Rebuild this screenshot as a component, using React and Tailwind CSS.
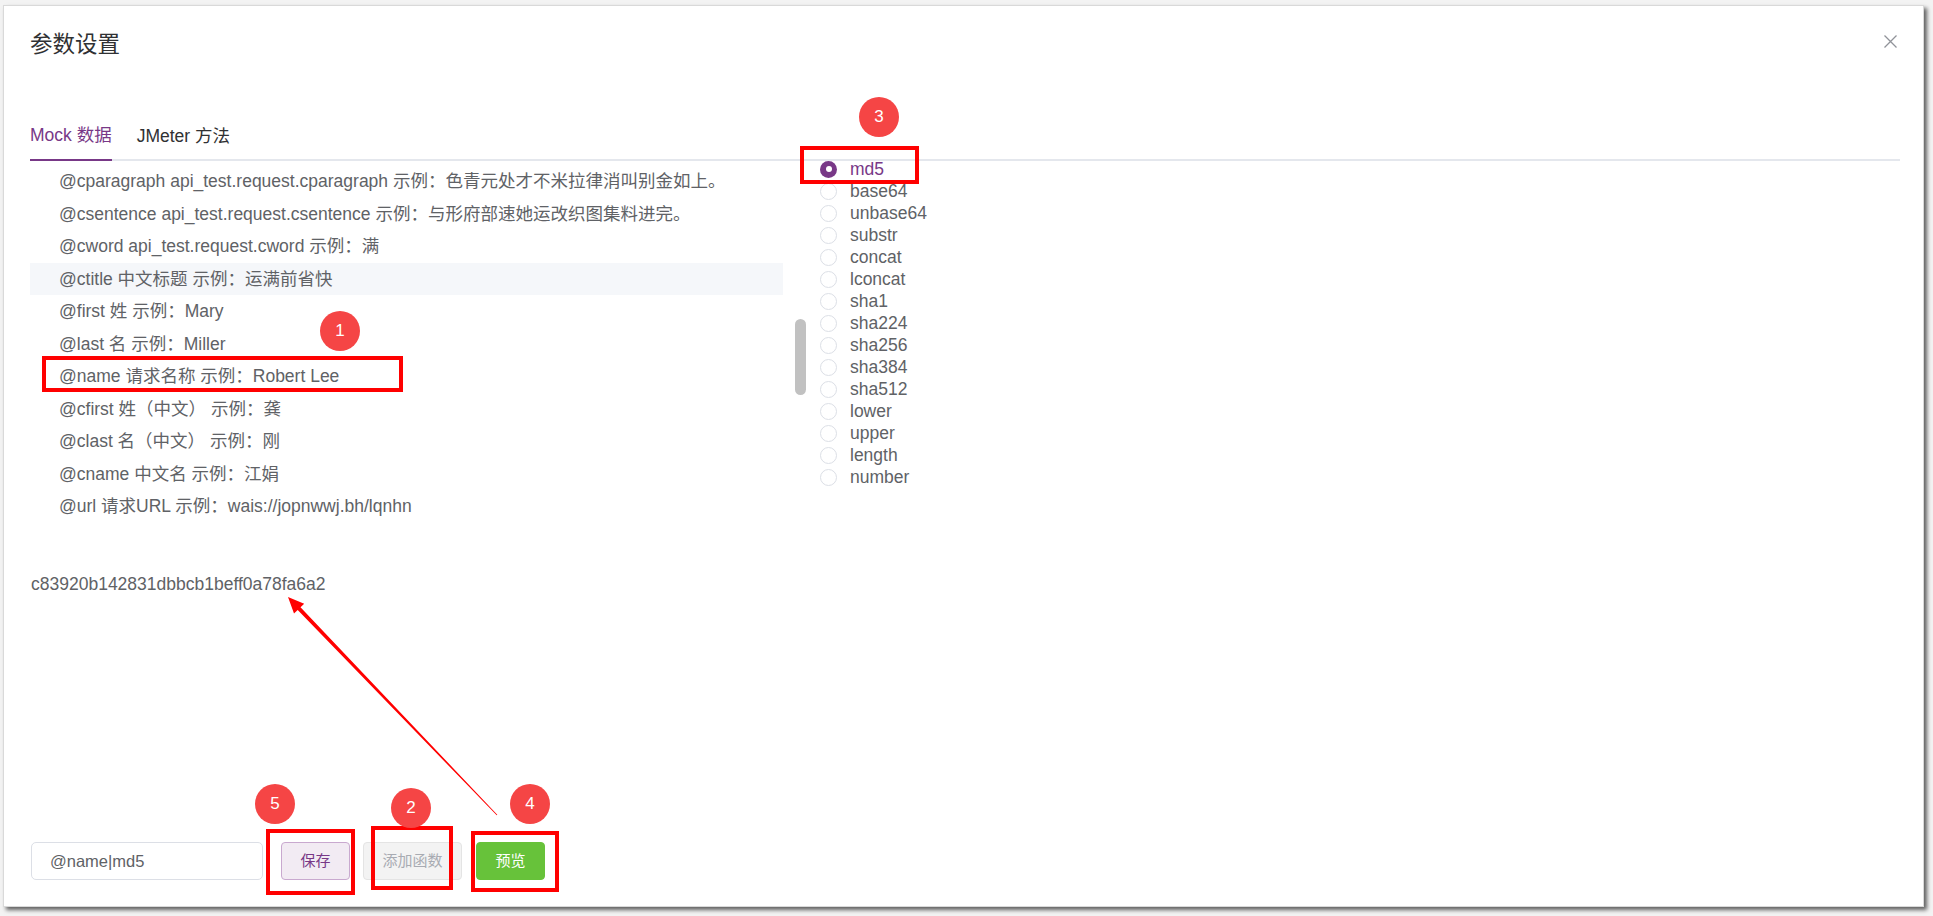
const rows = [
  "@cparagraph api_test.request.cparagraph 示例：色青元处才不米拉律消叫别金如上。",
  "@csentence api_test.request.csentence 示例：与形府部速她运改织图集料进完。",
  "@cword api_test.request.cword 示例：满",
  "@ctitle 中文标题 示例：运满前省快",
  "@first 姓 示例：Mary",
  "@last 名 示例：Miller",
  "@name 请求名称 示例：Robert Lee",
  "@cfirst 姓（中文） 示例：龚",
  "@clast 名（中文） 示例：刚",
  "@cname 中文名 示例：江娟",
  "@url 请求URL 示例：wais://jopnwwj.bh/lqnhn",
];

const funcs = [
  "md5", "base64", "unbase64", "substr", "concat", "lconcat", "sha1", "sha224",
  "sha256", "sha384", "sha512", "lower", "upper", "length", "number",
];

function Badge({ n, x, y }) {
  return (
    <div
      className="absolute w-[40px] h-[40px] rounded-full bg-[#f54545] text-white text-[17px] flex items-center justify-center"
      style={{ left: x - 20, top: y - 20 }}
    >
      {n}
    </div>
  );
}

function Box({ x, y, w, h }) {
  return (
    <div
      className="absolute border-[4px] border-[#ff0000]"
      style={{ left: x, top: y, width: w, height: h }}
    />
  );
}

export default function App() {
  return (
    <div className="relative w-[1933px] h-[916px] overflow-hidden bg-[#f3f3f3] pt-[5px] pl-[3px] font-['Liberation_Sans','Noto_Sans_CJK_SC',sans-serif]">
      <div className="flex flex-col w-[1921px] h-[902px] bg-white border border-[#d9d9d9] shadow-[3px_3px_4px_rgba(0,0,0,0.6)]">
        {/* header */}
        <div className="flex justify-between pl-[26px] pr-[25px] pt-[24px]">
          <h1 className="text-[22.5px] leading-[30px] text-[#303133] font-normal">参数设置</h1>
          <svg className="mt-[4px]" width="15" height="15" viewBox="0 0 15 15">
            <path d="M1.5 1.5L13.5 13.5M13.5 1.5L1.5 13.5" stroke="#909399" strokeWidth="1.3" />
          </svg>
        </div>

        {/* tabs */}
        <div className="mt-[51px] pl-[26px] pr-[23px]">
          <div className="flex h-[50px] border-b-2 border-[#e4e7ed] text-[17.5px]">
            <div className="h-[50px] flex items-center border-b-2 border-[#783887] text-[#783887] mr-[25px]">
              Mock 数据
            </div>
            <div className="h-[50px] flex items-center text-[#303133]">JMeter 方法</div>
          </div>
        </div>

        {/* content */}
        <div className="flex pl-[26px]">
          <div className="flex h-[370px] w-[778px]">
            <div className="w-[753px] pt-[4px] overflow-hidden">
              {rows.map((r, i) => (
                <div
                  key={i}
                  className={
                    "h-[32.5px] flex items-center pl-[29px] text-[17.5px] text-[#606266] whitespace-nowrap " +
                    (i === 3 ? "bg-[#f5f7fa]" : "")
                  }
                >
                  {r}
                </div>
              ))}
            </div>
            <div className="ml-[12px] w-[11px]">
              <div className="mt-[158px] h-[76px] w-[11px] rounded-full bg-[#c1c1c1]" />
            </div>
          </div>
          <div className="pl-[12px] -mt-[3px]">
            {funcs.map((f, i) => (
              <div key={f} className="h-[22px] flex items-center">
                {i === 0 ? (
                  <span className="w-[17px] h-[17px] rounded-full bg-[#783887] flex items-center justify-center">
                    <span className="w-[6px] h-[6px] rounded-full bg-white" />
                  </span>
                ) : (
                  <span className="w-[17px] h-[17px] rounded-full border border-[#dcdfe6] bg-white" />
                )}
                <span
                  className={
                    "ml-[13px] text-[17.5px] leading-[22px] " +
                    (i === 0 ? "text-[#783887]" : "text-[#606266]")
                  }
                >
                  {f}
                </span>
              </div>
            ))}
          </div>
        </div>

        {/* result */}
        <div className="mt-[41px] pl-[27px] h-[24px] leading-[24px] text-[17.5px] text-[#606266]">
          c83920b142831dbbcb1beff0a78fa6a2
        </div>

        {/* bottom */}
        <div className="mt-auto pb-[26px] pl-[27px] flex items-center">
          <div className="w-[232px] h-[38px] border border-[#dcdfe6] rounded-[5px] pl-[18px] flex items-center text-[16.5px] text-[#606266]">
            @name|md5
          </div>
          <button className="ml-[18px] w-[69px] h-[38px] rounded-[4px] border border-[#c9a9cf] bg-[#f2ebf3] text-[#783887] text-[15px]">
            保存
          </button>
          <button className="ml-[13px] w-[99px] h-[38px] rounded-[4px] border border-[#e4e4e4] bg-[#f3f3f3] text-[#a8abb2] text-[15px]">
            添加函数
          </button>
          <button className="ml-[14px] w-[69px] h-[38px] rounded-[4px] border border-[#67c23a] bg-[#67c23a] text-white text-[15px]">
            预览
          </button>
        </div>
      </div>

      {/* annotations */}
      <div className="absolute inset-0 pointer-events-none">
        <Box x={42} y={356} w={361} h={36} />
        <Box x={800} y={146} w={119} h={38} />
        <Box x={266} y={829} w={89} h={66} />
        <Box x={371} y={826} w={82} h={64} />
        <Box x={471} y={831} w={88} h={61} />
        <svg className="absolute left-0 top-0" width="1933" height="916">
          <polygon
            points="497.3,814.7 300.5,607.2 304.2,603.8 288,597 294,613.4 297.7,610 496.7,815.3"
            fill="#ff0000"
          />
        </svg>
        <Badge n="1" x={340} y={331} />
        <Badge n="3" x={879} y={117} />
        <Badge n="5" x={275} y={804} />
        <Badge n="2" x={411} y={808} />
        <Badge n="4" x={530} y={804} />
      </div>
    </div>
  );
}
